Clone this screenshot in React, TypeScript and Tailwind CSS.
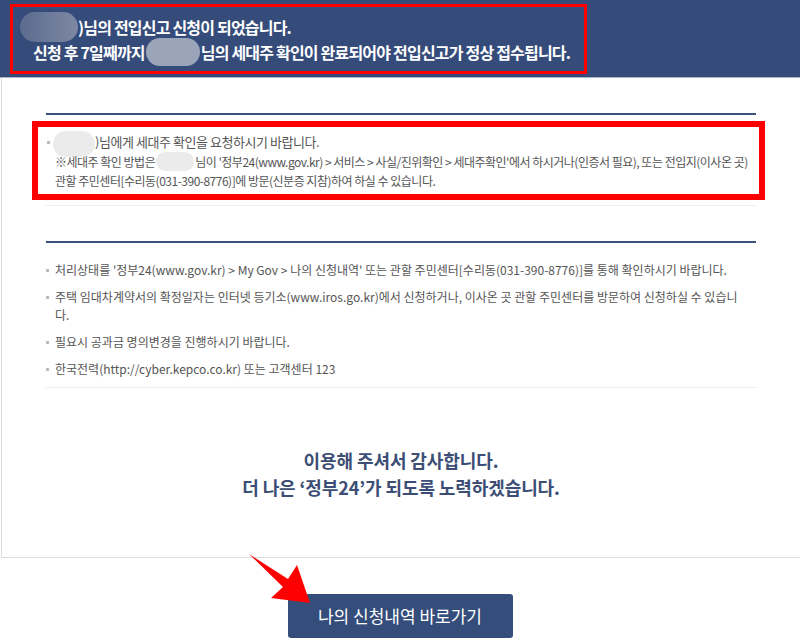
// 전입신고 신청 완료 화면
const FONT = { fontFamily: '"Noto Sans CJK KR", "Noto Sans", sans-serif' }

const NOTICES: React.ReactNode[] = [
  <>처리상태를 '정부24(www.gov.kr) &gt; My Gov &gt; 나의 신청내역' 또는 관할 주민센터[수리동(031-390-8776)]를 통해 확인하시기 바랍니다.</>,
  <>
    주택 임대차계약서의 확정일자는 인터넷 등기소(www.iros.go.kr)에서 신청하거나, 이사온 곳 관할 주민센터를 방문하여 신청하실 수 있습니
    <br />
    다.
  </>,
  <>필요시 공과금 명의변경을 진행하시기 바랍니다.</>,
  <>한국전력(http://cyber.kepco.co.kr) 또는 고객센터 123</>,
]

function Bullet() {
  return <span className="mt-[8px] mr-[6px] h-[3px] w-[3px] shrink-0 bg-[#bbbbbb]" />
}

function Arrow() {
  return (
    <svg className="absolute left-0 top-0" width="800" height="643" viewBox="0 0 800 643">
      <polygon points="249,554 288,579 297,565 310,603 271,598 283,587" fill="#ff0000" />
    </svg>
  )
}

export default function App() {
  return (
    <div className="relative h-[643px] w-[800px] overflow-hidden bg-white" style={FONT}>
      {/* 상단 안내 */}
      <div className="h-[78px] border-b border-[#aab4c8] bg-[#354c7a] pl-[10px] pt-[4px]">
        <div className="h-[70px] w-[577px] border-[3px] border-[#ff0000] pt-[7px] text-[16px] font-bold tracking-[-0.8px] text-white">
          <div className="flex h-[25px] items-center pl-[7px]">
            <span className="h-[30px] w-[58px] shrink-0 rounded-full bg-gradient-to-r from-[#5c6b8e] to-[#7d88a3]" />
            <span>)님의 전입신고 신청이 되었습니다.</span>
          </div>
          <div className="flex h-[26px] items-center pl-[20px]">
            <span>신청 후 7일째까지</span>
            <span className="mx-[1px] h-[28px] w-[54px] shrink-0 rounded-full bg-[#9aa5ba]" />
            <span>님의 세대주 확인이 완료되어야 전입신고가 정상 접수됩니다.</span>
          </div>
        </div>
      </div>

      {/* 본문 */}
      <div className="ml-[1px] h-[480px] border-b border-l border-[#dddddd]">
        <div className="ml-[44px] w-[710px] pt-[35px]">
          <div className="h-[2px] bg-[#3d5078]" />

          <div className="ml-[-14px] mt-[6px] w-[733px] border-[6px] border-[#ff0000] pl-[9px] pt-[5px] pb-[4px] text-[#555555]">
            <div className="flex h-[20px] items-center text-[13px] tracking-[-0.45px]">
              <span className="mr-[3px] h-[3px] w-[3px] shrink-0 bg-[#bbbbbb]" />
              <span className="h-[26px] w-[42px] shrink-0 translate-y-[2px] rounded-full bg-[#ebebeb]" />
              <span>)님에게 세대주 확인을 요청하시기 바랍니다.</span>
            </div>
            <div className="relative pl-[8px] text-[12px] leading-[19px] tracking-[-0.5px]">
              <div className="flex items-center whitespace-nowrap">
                <span>※세대주 확인 방법은</span>
                <span className="mx-[1px] h-[19px] w-[38px] shrink-0 rounded-full bg-[#ebebeb]" />
                <span>님이 '정부24(www.gov.kr) &gt; 서비스 &gt; 사실/진위확인 &gt; 세대주확인'에서 하시거나(인증서 필요), 또는 전입지(이사온 곳)</span>
              </div>
              <div className="whitespace-nowrap">관할 주민센터[수리동(031-390-8776)]에 방문(신분증 지참)하여 하실 수 있습니다.</div>
            </div>
          </div>

          <div className="mt-[5px] h-[1px] bg-[#eeeeee]" />
          <div className="mt-[35px] h-[2px] bg-[#3d5078]" />

          <ul className="pt-[18px] text-[12px] leading-[18px] text-[#555555]">
            {NOTICES.map((n, i) => (
              <li key={i} className="mb-[9px] flex whitespace-nowrap">
                <Bullet />
                <span>{n}</span>
              </li>
            ))}
          </ul>

          <div className="mt-[8px] h-[1px] bg-[#eeeeee]" />

          <div className="mt-[59px] text-center text-[18px] font-bold leading-[27px] tracking-[-0.1px] text-[#3c4e75]">
            <p>이용해 주셔서 감사합니다.</p>
            <p>더 나은 ‘정부24’가 되도록 노력하겠습니다.</p>
          </div>
        </div>
      </div>

      <div className="flex justify-center pt-[36px]">
        <button className="h-[44px] w-[225px] rounded-[3px] bg-[#344d7b] text-[17px] text-white">
          나의 신청내역 바로가기
        </button>
      </div>

      <Arrow />
    </div>
  )
}
